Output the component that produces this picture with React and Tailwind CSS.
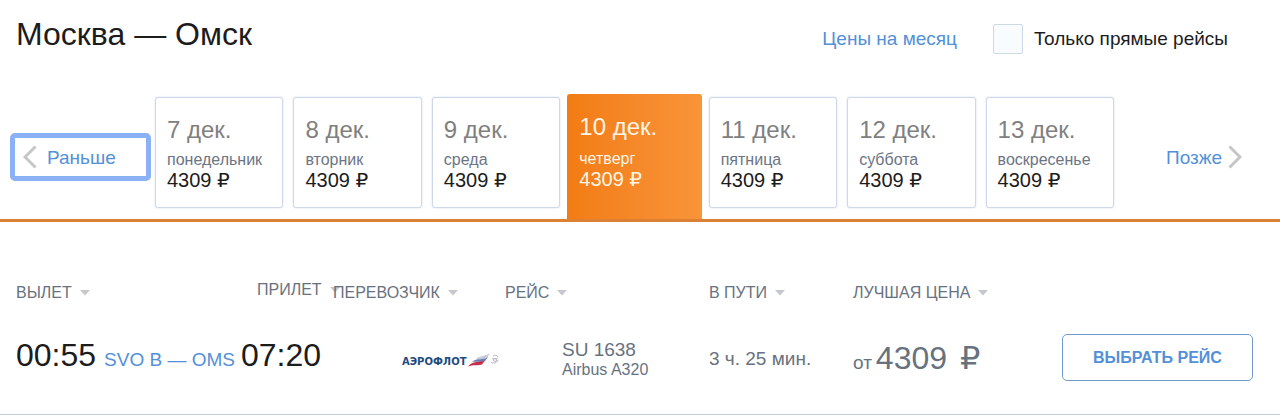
import React, { useState } from "react";

const days = [
  { date: "7 дек.", weekday: "понедельник", price: 4309 },
  { date: "8 дек.", weekday: "вторник", price: 4309 },
  { date: "9 дек.", weekday: "среда", price: 4309 },
  { date: "10 дек.", weekday: "четверг", price: 4309 },
  { date: "11 дек.", weekday: "пятница", price: 4309 },
  { date: "12 дек.", weekday: "суббота", price: 4309 },
  { date: "13 дек.", weekday: "воскресенье", price: 4309 },
];

function Price({ value, signClass = "" }) {
  return (
    <>
      {value} <span className={`font-['DejaVu_Sans',sans-serif] ${signClass}`}>₽</span>
    </>
  );
}

function Chevron({ left }) {
  return (
    <svg width="14" height="24" viewBox="0 0 14 24" fill="none" stroke="#c6c6c6" strokeWidth="3" className="shrink-0">
      <path d={left ? "M12.5 1.5 2 12l10.5 10.5" : "M1.5 1.5 12 12 1.5 22.5"} />
    </svg>
  );
}

function DayCard({ day, active, onClick }) {
  if (active) {
    return (
      <button
        type="button"
        onClick={onClick}
        className="-mx-[3px] flex flex-col items-start rounded-t-[3px] bg-gradient-to-r from-[#f27c12] to-[#f99439] pt-[17px] pb-[30px] pl-3 text-left text-[#fff5e4]"
      >
        <span className="text-2xl leading-8">{day.date}</span>
        <span className="mt-1.5 text-base leading-5">{day.weekday}</span>
        <span className="text-xl leading-5">
          <Price value={day.price} />
        </span>
      </button>
    );
  }
  return (
    <button
      type="button"
      onClick={onClick}
      className="mt-[3px] mb-[11px] flex flex-col items-start rounded-[3px] border border-[#cfd8ea] bg-white pt-4 pl-[11px] text-left shadow-[0_0_2px_#cfd8ea]"
    >
      <span className="text-2xl leading-8 text-[#808080]">{day.date}</span>
      <span className="mt-1 text-base leading-5 text-[#6b7584]">{day.weekday}</span>
      <span className="text-xl leading-5 text-[#1c1c1c]">
        <Price value={day.price} />
      </span>
    </button>
  );
}

function SortHeader({ children, className = "" }) {
  return (
    <th scope="col" className="p-0 text-left align-top font-normal whitespace-nowrap">
      <button type="button" className={`flex items-center gap-2 text-base leading-6 ${className}`}>
        {children}
        <svg width="10" height="6" viewBox="0 0 10 6" fill="#c4c7cb">
          <path d="M0 0h10L5 5.5z" />
        </svg>
      </button>
    </th>
  );
}

function AeroflotLogo() {
  return (
    <svg width="98" height="16" viewBox="0 0 98 16" role="img" aria-label="Аэрофлот">
      <text x="0" y="13" fontFamily="'DejaVu Sans', sans-serif" fontWeight="700" fontSize="10" fill="#1d4c80">
        АЭРОФЛОТ
      </text>
      <path d="M74 7c4-4 9-2 14-6l-3 5c-3 2-7 1-11 1z" fill="#c3cad8" />
      <path d="M70 10c5-5 11-1 16-5l-3 4c-4 2-8 0-13 1z" fill="#6a7fae" />
      <path d="M66 14.500c5-6.500 11-3.500 17-6l-3 4c-4 1.500-9-.5-14 2z" fill="#c62f4c" />
      <g fill="none" stroke="#b4b9c4" strokeWidth="1">
        <path d="M89 10c2 2 6 1 7-2M90 7c2-2 4 1 6-1M91 4c2-1 4-1 5 1" />
        <circle cx="93" cy="8" r="1.500" />
      </g>
    </svg>
  );
}

export default function App() {
  const [selected, setSelected] = useState(3);
  const [directOnly, setDirectOnly] = useState(false);

  return (
    <div className="bg-white font-['Liberation_Sans',Arial,sans-serif] text-[#1c1c1c]">
      <header className="flex items-start justify-between pt-3.5 pr-[52px] pl-4">
        <h1 className="text-[32px] leading-10">Москва — Омск</h1>
        <div className="flex items-center gap-9 pt-2.5 text-[19px] leading-[30px]">
          <a href="#month" className="text-[#5390d9]">
            Цены на месяц
          </a>
          <label className="flex items-center gap-[11px]">
            <input
              type="checkbox"
              checked={directOnly}
              onChange={(e) => setDirectOnly(e.target.checked)}
              className="size-[30px] appearance-none rounded-xs border border-[#cfd9e4] bg-[#f8fcff] checked:bg-[#5390d9]"
            />
            Только прямые рейсы
          </label>
        </div>
      </header>

      <nav className="mt-10 flex items-center border-b-[3px] border-[#dc8134] text-[19px]">
        <button
          type="button"
          className="mr-1 ml-2.5 flex h-12 w-[141px] items-center gap-2.5 rounded-[5px] border-5 border-[#8ab1f3] pl-2 text-[#5390d9]"
        >
          <Chevron left />
          <span className="pt-1">Раньше</span>
        </button>
        <div className="grid flex-1 grid-cols-7 gap-2.5">
          {days.map((day, i) => (
            <DayCard key={day.date} day={day} active={i === selected} onClick={() => setSelected(i)} />
          ))}
        </div>
        <button type="button" className="mr-[38px] ml-[52px] flex items-center gap-1.5 text-[#5390d9]">
          <span className="pt-1">Позже</span>
          <Chevron />
        </button>
      </nav>

      <table className="mt-14 w-full table-fixed border-b-2 border-[#c3cbdc] text-[#68727f]">
        <colgroup>
          <col className="w-[241px]" />
          <col className="w-[92px]" />
          <col className="w-[172px]" />
          <col className="w-[204px]" />
          <col className="w-[144px]" />
          <col className="w-[200px]" />
          <col />
        </colgroup>
        <thead>
          <tr>
            <SortHeader className="pt-[3px] pl-4">ВЫЛЕТ</SortHeader>
            <SortHeader className="pl-4">ПРИЛЕТ</SortHeader>
            <SortHeader className="pt-[3px]">ПЕРЕВОЗЧИК</SortHeader>
            <SortHeader className="pt-[3px]">РЕЙС</SortHeader>
            <SortHeader className="pt-[3px]">В ПУТИ</SortHeader>
            <SortHeader className="pt-[3px]">ЛУЧШАЯ ЦЕНА</SortHeader>
            <th className="p-0" aria-label="Выбор" />
          </tr>
        </thead>
        <tbody>
          <tr className="h-[110px] whitespace-nowrap">
            <td className="p-0 pb-2.5 pl-4">
              <div className="flex items-baseline gap-2">
                <span className="text-[32px] leading-10 text-[#1c1c1c]">00:55</span>
                <a href="#route" className="text-[19px] text-[#5390d9]">
                  SVO B — OMS
                </a>
              </div>
            </td>
            <td className="p-0 pb-2.5 text-[32px] leading-10 text-[#1c1c1c]">07:20</td>
            <td className="p-0 pl-[69px]">
              <AeroflotLogo />
            </td>
            <td className="p-0 pl-[57px]">
              <div className="text-[19px] leading-5">SU 1638</div>
              <div className="text-base leading-5">Airbus A320</div>
            </td>
            <td className="p-0 text-[19px]">3 ч. 25 мин.</td>
            <td className="p-0 pb-1">
              <div className="flex items-baseline gap-1">
                <span className="text-[19px]">от</span>
                <span className="text-[32px] leading-10">
                  <Price value={4309} signClass="ml-1" />
                </span>
              </div>
            </td>
            <td className="p-0 pr-[27px] pb-1">
              <button
                type="button"
                className="ml-auto block h-[47px] w-[191px] rounded-[5px] border border-[#6f9ccb] text-base font-bold text-[#5390d9]"
              >
                ВЫБРАТЬ РЕЙС
              </button>
            </td>
          </tr>
        </tbody>
      </table>
    </div>
  );
}
